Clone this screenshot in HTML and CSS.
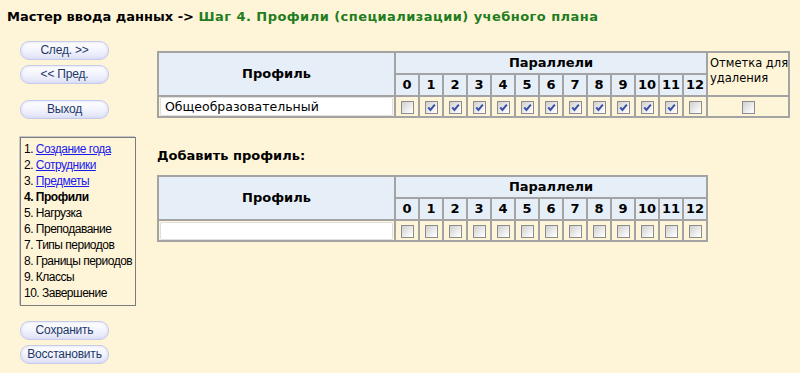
FILE: index.html
```html
<!DOCTYPE html>
<html lang="ru">
<head>
<meta charset="utf-8">
<title>Мастер ввода данных</title>
<link rel="stylesheet" href="styles.css">
</head>
<body>
<div class="title">Мастер ввода данных -&gt; <span class="step">Шаг 4. Профили (специализации) учебного плана</span></div>
<div class="main">
  <div class="sidebar">
    <div class="btn">След. &gt;&gt;</div>
    <div class="btn gap-s">&lt;&lt; Пред.</div>
    <div class="btn gap-l">Выход</div>
    <div class="menu">
      <div>1. <a href="#">Создание года</a></div>
      <div>2. <a href="#">Сотрудники</a></div>
      <div>3. <a href="#">Предметы</a></div>
      <div class="cur">4. Профили</div>
      <div>5. Нагрузка</div>
      <div>6. Преподавание</div>
      <div>7. Типы периодов</div>
      <div>8. Границы периодов</div>
      <div>9. Классы</div>
      <div>10. Завершение</div>
    </div>
    <div class="btn gap-m">Сохранить</div>
    <div class="btn gap-s">Восстановить</div>
  </div>
  <div class="content">
    <table class="grid">
      <tr class="hdr">
        <th rowspan="2" class="prof">Профиль</th>
        <th colspan="13">Параллели</th>
        <th rowspan="2" class="del">Отметка для<br>удаления</th>
      </tr>
      <tr class="hdr nums">
        <th>0</th><th>1</th><th>2</th><th>3</th><th>4</th><th>5</th><th>6</th><th>7</th><th>8</th><th>9</th><th>10</th><th>11</th><th>12</th>
      </tr>
      <tr class="row">
        <td class="pcell"><div class="inp">Общеобразовательный</div></td>
        <td><span class="cb"></span></td>
        <td><span class="cb"><svg viewBox="0 0 11 11"><path d="M2.3 5.4 L4.4 7.9 L8.8 2.6" /></svg></span></td>
        <td><span class="cb"><svg viewBox="0 0 11 11"><path d="M2.3 5.4 L4.4 7.9 L8.8 2.6" /></svg></span></td>
        <td><span class="cb"><svg viewBox="0 0 11 11"><path d="M2.3 5.4 L4.4 7.9 L8.8 2.6" /></svg></span></td>
        <td><span class="cb"><svg viewBox="0 0 11 11"><path d="M2.3 5.4 L4.4 7.9 L8.8 2.6" /></svg></span></td>
        <td><span class="cb"><svg viewBox="0 0 11 11"><path d="M2.3 5.4 L4.4 7.9 L8.8 2.6" /></svg></span></td>
        <td><span class="cb"><svg viewBox="0 0 11 11"><path d="M2.3 5.4 L4.4 7.9 L8.8 2.6" /></svg></span></td>
        <td><span class="cb"><svg viewBox="0 0 11 11"><path d="M2.3 5.4 L4.4 7.9 L8.8 2.6" /></svg></span></td>
        <td><span class="cb"><svg viewBox="0 0 11 11"><path d="M2.3 5.4 L4.4 7.9 L8.8 2.6" /></svg></span></td>
        <td><span class="cb"><svg viewBox="0 0 11 11"><path d="M2.3 5.4 L4.4 7.9 L8.8 2.6" /></svg></span></td>
        <td><span class="cb"><svg viewBox="0 0 11 11"><path d="M2.3 5.4 L4.4 7.9 L8.8 2.6" /></svg></span></td>
        <td><span class="cb"><svg viewBox="0 0 11 11"><path d="M2.3 5.4 L4.4 7.9 L8.8 2.6" /></svg></span></td>
        <td><span class="cb"></span></td>
        <td><span class="cb"></span></td>
      </tr>
    </table>

    <div class="add">Добавить профиль:</div>

    <table class="grid">
      <tr class="hdr">
        <th rowspan="2" class="prof">Профиль</th>
        <th colspan="13">Параллели</th>
      </tr>
      <tr class="hdr nums">
        <th>0</th><th>1</th><th>2</th><th>3</th><th>4</th><th>5</th><th>6</th><th>7</th><th>8</th><th>9</th><th>10</th><th>11</th><th>12</th>
      </tr>
      <tr class="row short">
        <td class="pcell"><div class="inp"></div></td>
        <td><span class="cb"></span></td>
        <td><span class="cb"></span></td>
        <td><span class="cb"></span></td>
        <td><span class="cb"></span></td>
        <td><span class="cb"></span></td>
        <td><span class="cb"></span></td>
        <td><span class="cb"></span></td>
        <td><span class="cb"></span></td>
        <td><span class="cb"></span></td>
        <td><span class="cb"></span></td>
        <td><span class="cb"></span></td>
        <td><span class="cb"></span></td>
        <td><span class="cb"></span></td>
      </tr>
    </table>
  </div>
</div>
</body>
</html>
```

FILE: styles.css
```css
html, body {
  margin: 0;
  padding: 0;
  background: #fef5d8;
}
body {
  padding: 8px 7px;
  font-family: "DejaVu Sans", Verdana, sans-serif;
  color: #000;
}
.title {
  font-weight: bold;
  font-size: 13px;
  line-height: 18px;
  white-space: nowrap;
}
.title .step {
  color: #1e7d1e;
  letter-spacing: 0.45px;
}
.main {
  display: flex;
  margin-top: 15px;
}
.sidebar {
  margin-left: 13px;
  width: 116px;
  display: flex;
  flex-direction: column;
  align-items: flex-start;
}
.btn {
  box-sizing: border-box;
  width: 89px;
  height: 19px;
  border: 1px solid #c6cbea;
  border-radius: 9px;
  background: linear-gradient(#ffffff 0%, #f4f5fd 45%, #e0e3f7 100%);
  box-shadow: inset 0 0 3px #cfd4f2;
  font-family: "Liberation Sans", Arial, sans-serif;
  font-size: 12px;
  letter-spacing: -0.2px;
  line-height: 17px;
  text-align: center;
  color: #1d3868;
}
.gap-s { margin-top: 5px; }
.gap-l { margin-top: 16px; }
.gap-m { margin-top: 15px; }
.menu {
  box-sizing: border-box;
  margin-top: 18px;
  width: 116px;
  height: 169px;
  border: 1px solid #7c7c7c;
  box-shadow: -1px -1px 0 #c8c8c8;
  padding: 3px 0 0 3px;
  font-family: "Liberation Sans", Arial, sans-serif;
  font-size: 12px;
  letter-spacing: -0.5px;
  line-height: 16px;
  white-space: nowrap;
}
.menu a {
  color: #1a1aee;
  text-decoration: underline;
}
.menu .cur {
  font-weight: bold;
}
.content {
  margin-left: 21px;
  padding-top: 10px;
}
.grid {
  border-collapse: collapse;
  table-layout: fixed;
  border: 2px solid #7b808c;
}
.grid th, .grid td {
  border: 2px solid #a3a3a3;
  padding: 0;
}
.hdr th {
  background: #e6eef8;
  font-size: 13px;
  font-weight: bold;
  height: 20px;
  line-height: 16px;
}
.hdr th.prof {
  width: 235px;
}
.nums th {
  width: 22px;
  text-align: center;
}
.hdr th.del {
  width: 76px;
  background: #fef5d8;
  font-weight: normal;
  font-size: 11.5px;
  line-height: 15px;
  text-align: left;
  white-space: nowrap;
  padding-left: 2px;
  padding-bottom: 6px;
}
.row td {
  height: 19px;
  text-align: center;
  vertical-align: middle;
}
.row.short td {
  height: 18px;
}
.row td.pcell {
  padding: 0 1px;
}
.inp {
  box-sizing: border-box;
  height: 19px;
  background: #fff;
  border: 1px solid #e0e0e0;
  border-radius: 2px;
  text-align: left;
  font-size: 12.5px;
  line-height: 17px;
  padding-left: 4px;
}
.row.short .inp {
  height: 18px;
}
.cb {
  display: inline-block;
  vertical-align: middle;
  width: 11px;
  height: 11px;
  border: 1px solid #8c8c8c;
  background: linear-gradient(135deg, #cfcfcf 0%, #ececec 55%, #ffffff 100%);
}
.cb svg {
  display: block;
  width: 11px;
  height: 11px;
}
.cb svg path {
  fill: none;
  stroke: #3a4ea6;
  stroke-width: 1.9;
}
.add {
  margin-top: 30px;
  margin-bottom: 11px;
  font-weight: bold;
  font-size: 13px;
  line-height: 16px;
}
```
